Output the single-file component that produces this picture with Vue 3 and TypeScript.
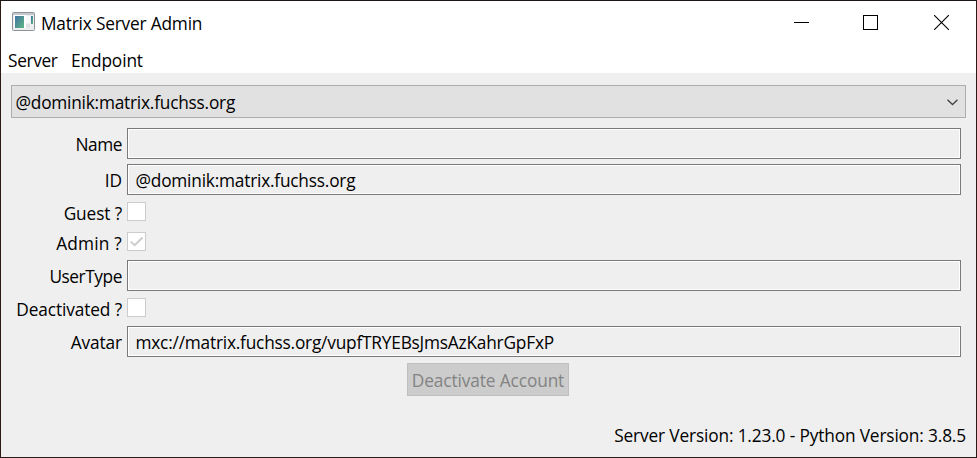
<script setup lang="ts">
interface Row {
  label: string
  kind: 'text' | 'check'
  value?: string
  checked?: boolean
  key: string
}

const rows: Row[] = [
  { key: 'name', label: 'Name', kind: 'text', value: '' },
  { key: 'id', label: 'ID', kind: 'text', value: '@dominik:matrix.fuchss.org' },
  { key: 'guest', label: 'Guest ?', kind: 'check', checked: false },
  { key: 'admin', label: 'Admin ?', kind: 'check', checked: true },
  { key: 'usertype', label: 'UserType', kind: 'text', value: '' },
  { key: 'deactivated', label: 'Deactivated ?', kind: 'check', checked: false },
  { key: 'avatar', label: 'Avatar', kind: 'text', value: 'mxc://matrix.fuchss.org/vupfTRYEBsJmsAzKahrGpFxP' },
]
</script>

<template>
  <div class="window">
    <header class="titlebar">
      <svg class="app-icon" width="23" height="19" viewBox="0 0 23 19">
        <defs>
          <linearGradient id="pane" x1="0" y1="0" x2="1" y2="1">
            <stop offset="0" stop-color="#4272a4" />
            <stop offset="1" stop-color="#5fb883" />
          </linearGradient>
        </defs>
        <rect x="0.5" y="0.5" width="22" height="18" rx="1" fill="#eceeef" stroke="#8c9296" />
        <rect x="1" y="1" width="21" height="2" fill="#c3c9ce" />
        <rect x="2" y="3" width="12" height="13" fill="#fff" />
        <rect x="3" y="4" width="9" height="12" fill="url(#pane)" />
        <rect x="14" y="4" width="4" height="7" fill="#fafafa" />
        <rect x="19" y="4" width="2" height="8" fill="url(#pane)" />
        <rect x="14" y="12" width="4" height="4" fill="#e0e2e3" />
      </svg>
      <span class="title">Matrix Server Admin</span>
      <div class="controls">
        <svg width="15" height="15" viewBox="0 0 15 15"><path d="M0 7.5H15" stroke="#000" /></svg>
        <svg width="15" height="15" viewBox="0 0 15 15"><rect x="0.5" y="0.5" width="14" height="14" fill="none" stroke="#000" /></svg>
        <svg width="15" height="15" viewBox="0 0 15 15"><path d="M0 0L15 15M15 0L0 15" stroke="#000" stroke-width="1.1" /></svg>
      </div>
    </header>
    <nav class="menubar">
      <span class="menu-server">Server</span>
      <span class="menu-endpoint">Endpoint</span>
    </nav>
    <main class="content">
      <div class="combo">
        <span class="combo-text">@dominik:matrix.fuchss.org</span>
        <svg width="11" height="7" viewBox="0 0 11 7"><path d="M0.5 0.7L5.5 5.5L10.5 0.7" fill="none" stroke="#444" stroke-width="1.3" /></svg>
      </div>
      <div class="form">
        <div v-for="row in rows" :key="row.key" class="row" :class="row.kind">
          <span class="label" :class="'label-' + row.key">{{ row.label }}</span>
          <div v-if="row.kind === 'text'" class="field">{{ row.value }}</div>
          <div v-else class="box">
            <svg v-if="row.checked" width="17" height="17" viewBox="0 0 17 17"><path d="M2.7 8.6L6.6 12.3L14.6 4.5" fill="none" stroke="#ccc" stroke-width="1.9" /></svg>
          </div>
        </div>
      </div>
      <button class="action" disabled>Deactivate Account</button>
      <footer class="status">Server Version: 1.23.0 - Python Version: 3.8.5</footer>
    </main>
  </div>
</template>

<style>
body {
  overflow: hidden;
}
</style>

<style scoped>
.window {
  box-sizing: border-box;
  width: 977px;
  height: 458px;
  display: flex;
  flex-direction: column;
  border: 1px solid #2b1916;
  border-top-color: #1b1517;
  background: #efefef;
  color: #000;
  font-family: "Open Sans", "Noto Sans", sans-serif;
  font-size: 17.3px;
  font-weight: 370;
  line-height: 24px;
  white-space: nowrap;
}
.titlebar {
  height: 45px;
  flex: none;
  display: flex;
  align-items: flex-start;
  background: #fff;
}
.app-icon {
  margin: 11px 0 0 11px;
}
.title {
  margin: 11px 0 0 6px;
  letter-spacing: -0.19px;
}
.controls {
  margin: 14px 27px 0 auto;
  display: flex;
}
.controls svg + svg {
  margin-left: 54px;
}
.controls svg + svg + svg {
  margin-left: 56px;
}
.menubar {
  box-sizing: border-box;
  height: 27px;
  flex: none;
  display: flex;
  gap: 14px;
  padding: 3px 0 0 7px;
  background: #fff;
}
.menu-server {
  width: 49px;
  letter-spacing: -0.35px;
}
.menu-endpoint {
  letter-spacing: -0.12px;
}
.content {
  flex: 1;
  display: flex;
  flex-direction: column;
  padding: 12px 10px 9px;
}
.combo {
  box-sizing: border-box;
  height: 33px;
  flex: none;
  display: flex;
  align-items: center;
  justify-content: space-between;
  padding: 2px 7px 0 3.5px;
  border: 1px solid #adadad;
  background: #e1e1e1;
}
.combo-text {
  padding-top: 1px;
  letter-spacing: -0.22px;
}
.form {
  display: flex;
  flex-direction: column;
  gap: 5px;
  padding: 10px 5px 0 0;
}
.row {
  display: flex;
  height: 31px;
}
.row.check {
  height: 25px;
}
.label {
  width: 111px;
  margin-right: 5px;
  padding-top: 5px;
  display: flex;
  justify-content: flex-end;
  box-sizing: border-box;
  letter-spacing: -0.12px;
}
.check .label {
  padding-top: 2px;
}
.label-name,
.label-usertype {
  letter-spacing: -0.43px;
}
.label-admin {
  letter-spacing: 0.2px;
}
.field {
  flex: 1;
  box-sizing: border-box;
  border: 1px solid #7a7a7a;
  box-shadow: inset 0 0 0 1px #fff;
  padding: 4px 8px 0 7.5px;
  letter-spacing: -0.21px;
}
.box {
  box-sizing: border-box;
  width: 19px;
  height: 19px;
  margin-top: 2px;
  border: 1px solid #ccc;
  background: #fff;
}
.box svg {
  display: block;
}
.action {
  align-self: center;
  box-sizing: border-box;
  width: 162px;
  height: 33px;
  margin: 6px 1px 0 0;
  padding: 3px 0 0;
  border: 1px solid #bfbfbf;
  background: #ccc;
  color: #838383;
  font: inherit;
  letter-spacing: -0.12px;
}
.status {
  margin-top: auto;
  align-self: flex-end;
  letter-spacing: -0.15px;
}
</style>
